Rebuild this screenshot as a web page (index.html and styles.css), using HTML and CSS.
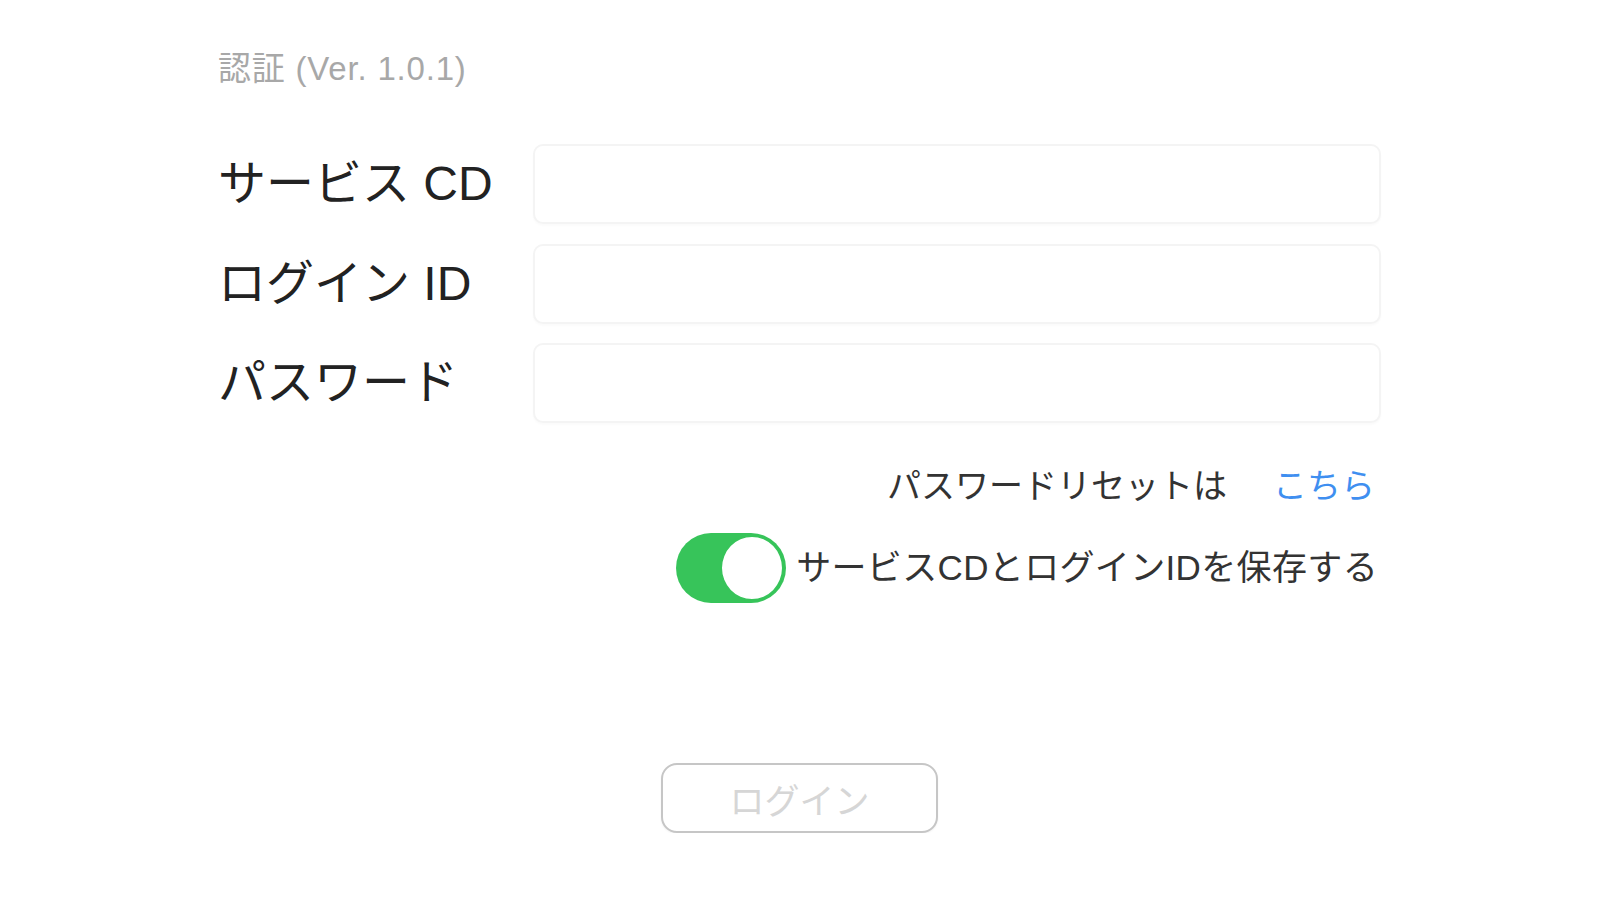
FILE: index.html
```html
<!DOCTYPE html>
<html lang="ja">
<head>
<meta charset="utf-8">
<title>認証</title>
<link rel="stylesheet" href="styles.css">
</head>
<body>
<main class="page">
  <h1 class="title">認証 (Ver. 1.0.1)</h1>
  <form class="form">
    <label class="label" for="svc">サービス CD</label>
    <input class="field" id="svc" type="text">
    <label class="label" for="uid">ログイン ID</label>
    <input class="field" id="uid" type="text">
    <label class="label" for="pw">パスワード</label>
    <input class="field" id="pw" type="password">
  </form>
  <div class="reset">
    <span class="reset-text">パスワードリセットは</span>
    <a class="reset-link" href="#">こちら</a>
  </div>
  <div class="save">
    <span class="toggle"><span class="knob"></span></span>
    <span class="save-text">サービスCDとログインIDを保存する</span>
  </div>
  <div class="actions">
    <button class="login" type="button">ログイン</button>
  </div>
</main>
</body>
</html>
```

FILE: styles.css
```css
html, body {
  margin: 0;
  background: #ffffff;
}

body {
  font-family: "Liberation Sans", "Noto Sans CJK JP", sans-serif;
  color: #222;
}

.page {
  width: 1163px;
  margin: 0 auto;
  padding-top: 49px;
}

.title {
  margin: 0;
  font-size: 33px;
  line-height: 40px;
  letter-spacing: 0.8px;
  font-weight: normal;
  color: #a8a8a8;
}

.form {
  margin-top: 55px;
  display: grid;
  grid-template-columns: 315px 1fr;
  grid-auto-rows: 80px;
  row-gap: 19.5px;
  align-items: center;
}

.label {
  font-size: 48px;
  line-height: 80px;
  color: #222;
}

.field {
  box-sizing: border-box;
  height: 80px;
  width: 100%;
  border: 2px solid #f4f4f4;
  border-radius: 10px;
  background: #fff;
  box-shadow: 0 2px 2px rgba(0, 0, 0, 0.02);
  outline: none;
  font-size: 32px;
  padding: 0 16px;
}

.reset {
  margin-top: 38px;
  display: flex;
  justify-content: flex-end;
  align-items: center;
  gap: 46px;
  padding-right: 6px;
  font-size: 34px;
  line-height: 50px;
}

.reset-text {
  color: #333;
}

.reset-link {
  color: #3f8ff0;
  text-decoration: none;
}

.save {
  margin-top: 22px;
  display: flex;
  justify-content: flex-end;
  align-items: center;
  gap: 10px;
  padding-right: 3px;
}

.toggle {
  box-sizing: border-box;
  width: 110px;
  height: 70px;
  border-radius: 35px;
  background: #37c45a;
  display: flex;
  justify-content: flex-end;
  align-items: center;
  padding: 2px;
}

.knob {
  box-sizing: border-box;
  width: 64px;
  height: 66px;
  border-radius: 50%;
  background: #fff;
  border: 2px solid #37c45a;
}

.save-text {
  font-size: 35px;
  line-height: 50px;
  letter-spacing: 0.35px;
  color: #333;
}

.actions {
  margin-top: 160px;
  display: flex;
  justify-content: center;
}

.login {
  box-sizing: border-box;
  width: 277px;
  height: 70px;
  border: 2px solid #c6c6c6;
  border-radius: 16px;
  background: #fff;
  color: #d6d6d6;
  font-family: "Liberation Sans", "Noto Sans CJK JP", sans-serif;
  font-size: 35px;
  box-shadow: 0 1px 2px rgba(0, 0, 0, 0.06);
}
```
